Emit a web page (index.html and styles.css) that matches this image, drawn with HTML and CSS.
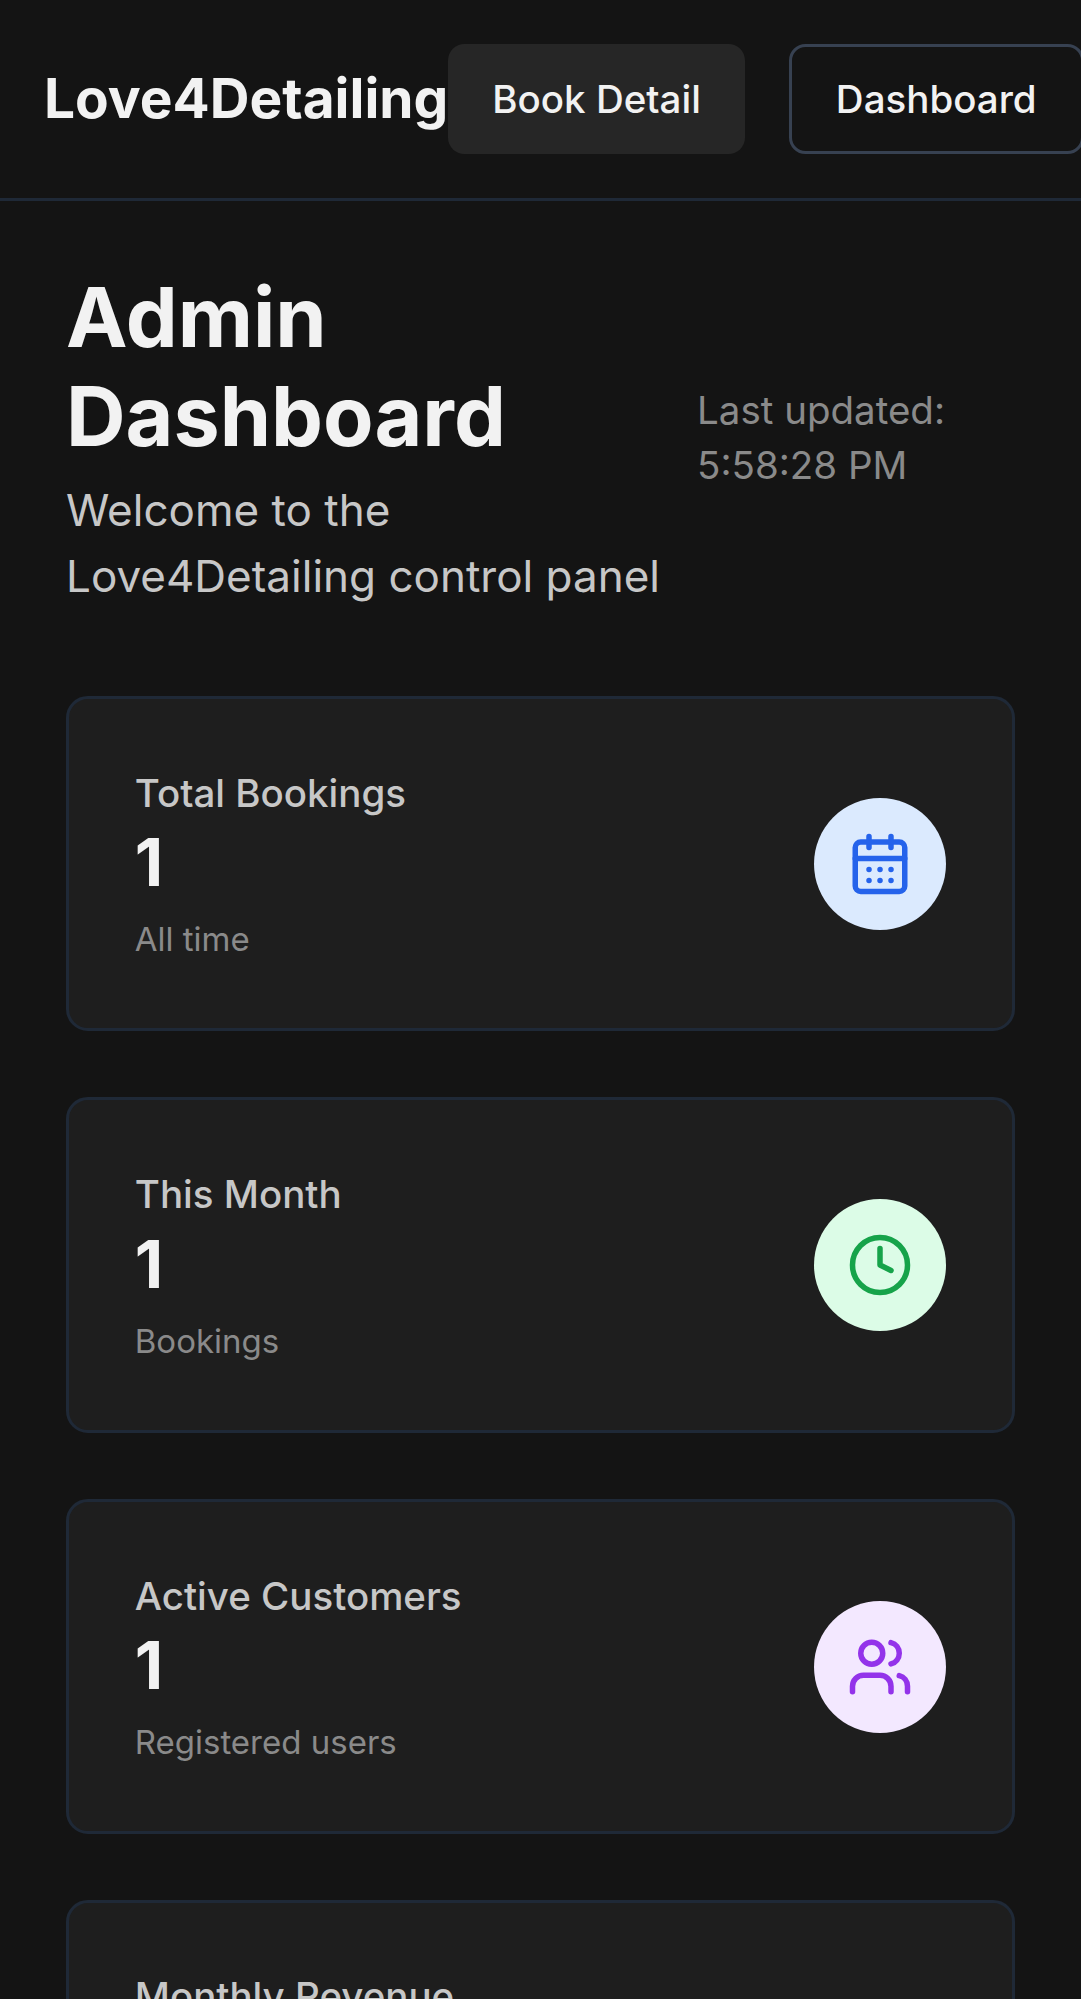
FILE: index.html
```html
<!DOCTYPE html>
<html lang="en">
<head>
<meta charset="utf-8">
<title>Admin Dashboard</title>
<link rel="stylesheet" href="styles.css">
</head>
<body>
<header class="topbar">
  <a class="brand">Love4Detailing</a>
  <nav class="nav">
    <a class="btn btn-solid">Book Detail</a>
    <a class="btn btn-outline">Dashboard</a>
  </nav>
</header>
<main class="page">
  <section class="intro">
    <div class="intro-text">
      <h1>Admin Dashboard</h1>
      <p>Welcome to the Love4Detailing control panel</p>
    </div>
    <div class="updated">Last updated: 5:58:28 PM</div>
  </section>
  <section class="stats">
    <article class="card">
      <div>
        <p class="label">Total Bookings</p>
        <p class="value">1</p>
        <p class="note">All time</p>
      </div>
      <div class="badge badge-blue">
        <svg class="icon" viewBox="0 0 24 24"><path d="M8 2v4M16 2v4"/><rect x="3" y="4" width="18" height="18" rx="2"/><path d="M3 10h18M8 14h.01M12 14h.01M16 14h.01M8 18h.01M12 18h.01M16 18h.01"/></svg>
      </div>
    </article>
    <article class="card">
      <div>
        <p class="label">This Month</p>
        <p class="value">1</p>
        <p class="note">Bookings</p>
      </div>
      <div class="badge badge-green">
        <svg class="icon" viewBox="0 0 24 24"><circle cx="12" cy="12" r="10"/><path d="M12 6v6l4 2"/></svg>
      </div>
    </article>
    <article class="card">
      <div>
        <p class="label">Active Customers</p>
        <p class="value">1</p>
        <p class="note">Registered users</p>
      </div>
      <div class="badge badge-purple">
        <svg class="icon" viewBox="0 0 24 24"><path d="M16 21v-2a4 4 0 0 0-4-4H6a4 4 0 0 0-4 4v2"/><circle cx="9" cy="7" r="4"/><path d="M22 21v-2a4 4 0 0 0-3-3.87M16 3.13a4 4 0 0 1 0 7.75"/></svg>
      </div>
    </article>
    <article class="card card-top">
      <p class="label">Monthly Revenue</p>
    </article>
  </section>
</main>
</body>
</html>
```
FILE: styles.css
```css
html {
  font-size: 44px;
}
* {
  box-sizing: border-box;
  margin: 0;
}
body {
  height: 1999px;
  overflow: hidden;
  background: #141414;
  color: #f2f2f2;
  font-family: Inter, "Liberation Sans", sans-serif;
  line-height: 1.5;
}
.topbar {
  display: flex;
  align-items: center;
  justify-content: space-between;
  padding: 1rem;
  border-bottom: 3px solid #1f2937;
}
.brand {
  padding-bottom: 2px;
  font-size: 1.25rem;
  font-weight: 700;
  line-height: 1.75rem;
}
.nav {
  display: flex;
  gap: 1rem;
}
.btn {
  display: flex;
  flex: none;
  align-items: center;
  height: 2.5rem;
  padding: 2px 1rem 0;
  border-radius: 16.5px;
  font-size: 0.875rem;
  font-weight: 500;
  white-space: nowrap;
}
.btn-solid {
  background: #262626;
}
.btn-outline {
  border: 3px solid #374151;
}
.page {
  padding: 65.75px 1.5rem 1.5rem;
}
.intro {
  display: flex;
  align-items: center;
  justify-content: space-between;
  height: 341px;
  margin-bottom: 2rem;
}
.intro-text {
  width: 600px;
  padding-top: 2.5px;
}
h1 {
  font-size: 1.875rem;
  font-weight: 700;
  line-height: 2.25rem;
}
.intro-text p {
  margin-top: 0.25rem;
  color: #c7c7c7;
}
.updated {
  width: 318px;
  padding: 0.5px 40px 0 0;
  color: #8a8a8a;
  font-size: 0.875rem;
  line-height: 1.25rem;
}
.stats {
  display: grid;
  gap: 1.5rem;
}
.card {
  display: flex;
  align-items: center;
  justify-content: space-between;
  height: 335.5px;
  padding: 0 65.75px;
  border: 3px solid #1f2937;
  border-radius: 22px;
  background: #1e1e1e;
}
.card-top {
  align-items: flex-start;
  padding-top: 65.75px;
}
.label {
  color: #c7c7c7;
  font-size: 0.875rem;
  font-weight: 500;
  line-height: 1.25rem;
}
.value {
  margin: -2.5px 0 3.2px;
  font-size: 1.5rem;
  font-weight: 700;
  line-height: 2rem;
}
.note {
  margin-top: 0.25rem;
  color: #8a8a8a;
  font-size: 0.75rem;
  line-height: 1rem;
}
.badge {
  display: grid;
  place-items: center;
  width: 3rem;
  height: 3rem;
  border-radius: 50%;
}
.badge-blue {
  background: #dbeafe;
  color: #2563eb;
}
.badge-green {
  background: #dcfce7;
  color: #16a34a;
}
.badge-purple {
  background: #f3e8ff;
  color: #9333ea;
}
.icon {
  width: 1.5rem;
  height: 1.5rem;
  fill: none;
  stroke: currentColor;
  stroke-width: 2;
  stroke-linecap: round;
  stroke-linejoin: round;
}
```
